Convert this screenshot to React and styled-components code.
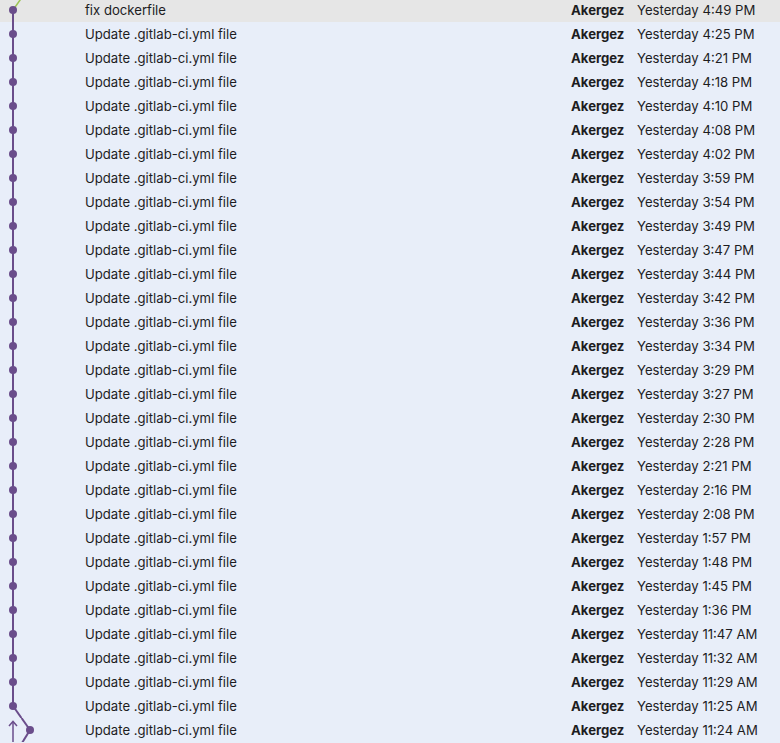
import React from "react";
import styled, { createGlobalStyle } from "styled-components";

const GlobalStyle = createGlobalStyle`
  html, body {
    margin: 0;
    padding: 0;
    background: #e8eef9;
    overflow: hidden;
  }
  body {
    font-family: Inter, "Noto Sans", sans-serif;
  }
`;

const PURPLE = "#6a4d8b";
const GREEN = "#9cc454";

const commits = [
  ["fix dockerfile", "4:49 PM"],
  ["Update .gitlab-ci.yml file", "4:25 PM"],
  ["Update .gitlab-ci.yml file", "4:21 PM"],
  ["Update .gitlab-ci.yml file", "4:18 PM"],
  ["Update .gitlab-ci.yml file", "4:10 PM"],
  ["Update .gitlab-ci.yml file", "4:08 PM"],
  ["Update .gitlab-ci.yml file", "4:02 PM"],
  ["Update .gitlab-ci.yml file", "3:59 PM"],
  ["Update .gitlab-ci.yml file", "3:54 PM"],
  ["Update .gitlab-ci.yml file", "3:49 PM"],
  ["Update .gitlab-ci.yml file", "3:47 PM"],
  ["Update .gitlab-ci.yml file", "3:44 PM"],
  ["Update .gitlab-ci.yml file", "3:42 PM"],
  ["Update .gitlab-ci.yml file", "3:36 PM"],
  ["Update .gitlab-ci.yml file", "3:34 PM"],
  ["Update .gitlab-ci.yml file", "3:29 PM"],
  ["Update .gitlab-ci.yml file", "3:27 PM"],
  ["Update .gitlab-ci.yml file", "2:30 PM"],
  ["Update .gitlab-ci.yml file", "2:28 PM"],
  ["Update .gitlab-ci.yml file", "2:21 PM"],
  ["Update .gitlab-ci.yml file", "2:16 PM"],
  ["Update .gitlab-ci.yml file", "2:08 PM"],
  ["Update .gitlab-ci.yml file", "1:57 PM"],
  ["Update .gitlab-ci.yml file", "1:48 PM"],
  ["Update .gitlab-ci.yml file", "1:45 PM"],
  ["Update .gitlab-ci.yml file", "1:36 PM"],
  ["Update .gitlab-ci.yml file", "11:47 AM"],
  ["Update .gitlab-ci.yml file", "11:32 AM"],
  ["Update .gitlab-ci.yml file", "11:29 AM"],
  ["Update .gitlab-ci.yml file", "11:25 AM"],
  ["Update .gitlab-ci.yml file", "11:24 AM"],
];

const List = styled.div`
  display: flex;
  flex-direction: column;
  margin-top: -2px;
`;

const Row = styled.div`
  display: grid;
  grid-template-columns: 85px 1fr 66px 143px;
  align-items: center;
  height: 24px;
  background: ${(p) => (p.$selected ? "#e6e6e6" : "#e8eef9")};
  color: #1d1d1f;
  font-size: 13.15px;
`;

const Graph = styled.svg`
  display: block;
  width: 85px;
  height: 24px;
`;

const Message = styled.span`
  white-space: nowrap;
`;

const Author = styled.span`
  font-weight: 700;
`;

const When = styled.span`
  white-space: nowrap;
`;

function GraphCell({ kind }) {
  return (
    <Graph viewBox="0 0 85 24">
      {kind === "first" && (
        <>
          <line x1="13" y1="12" x2="21.5" y2="0" stroke={GREEN} strokeWidth="1.5" />
          <line x1="13" y1="12" x2="13" y2="24" stroke={PURPLE} strokeWidth="2" />
          <circle cx="13" cy="12" r="4" fill={PURPLE} />
        </>
      )}
      {kind === "middle" && (
        <>
          <line x1="13" y1="0" x2="13" y2="24" stroke={PURPLE} strokeWidth="2" />
          <circle cx="13" cy="12" r="4" fill={PURPLE} />
        </>
      )}
      {kind === "fork" && (
        <>
          <line x1="13" y1="0" x2="13" y2="12" stroke={PURPLE} strokeWidth="2" />
          <line x1="13" y1="12" x2="21.5" y2="24" stroke={PURPLE} strokeWidth="2" />
          <circle cx="13" cy="12" r="4" fill={PURPLE} />
        </>
      )}
      {kind === "last" && (
        <>
          <line x1="21.5" y1="0" x2="30" y2="12" stroke={PURPLE} strokeWidth="2" />
          <line x1="30" y1="12" x2="22" y2="25" stroke={PURPLE} strokeWidth="2" />
          <line x1="13" y1="4" x2="13" y2="24" stroke={PURPLE} strokeWidth="1.5" />
          <polyline points="9,8 13,3.5 17,8" fill="none" stroke={PURPLE} strokeWidth="1.5" />
          <circle cx="30" cy="12" r="4" fill={PURPLE} />
        </>
      )}
    </Graph>
  );
}

export default function App() {
  const n = commits.length;
  return (
    <>
      <GlobalStyle />
      <List>
        {commits.map(([msg, time], i) => {
          const kind =
            i === 0 ? "first" : i === n - 1 ? "last" : i === n - 2 ? "fork" : "middle";
          return (
            <Row key={i} $selected={i === 0}>
              <GraphCell kind={kind} />
              <Message>{msg}</Message>
              <Author>Akergez</Author>
              <When>Yesterday {time}</When>
            </Row>
          );
        })}
      </List>
    </>
  );
}
